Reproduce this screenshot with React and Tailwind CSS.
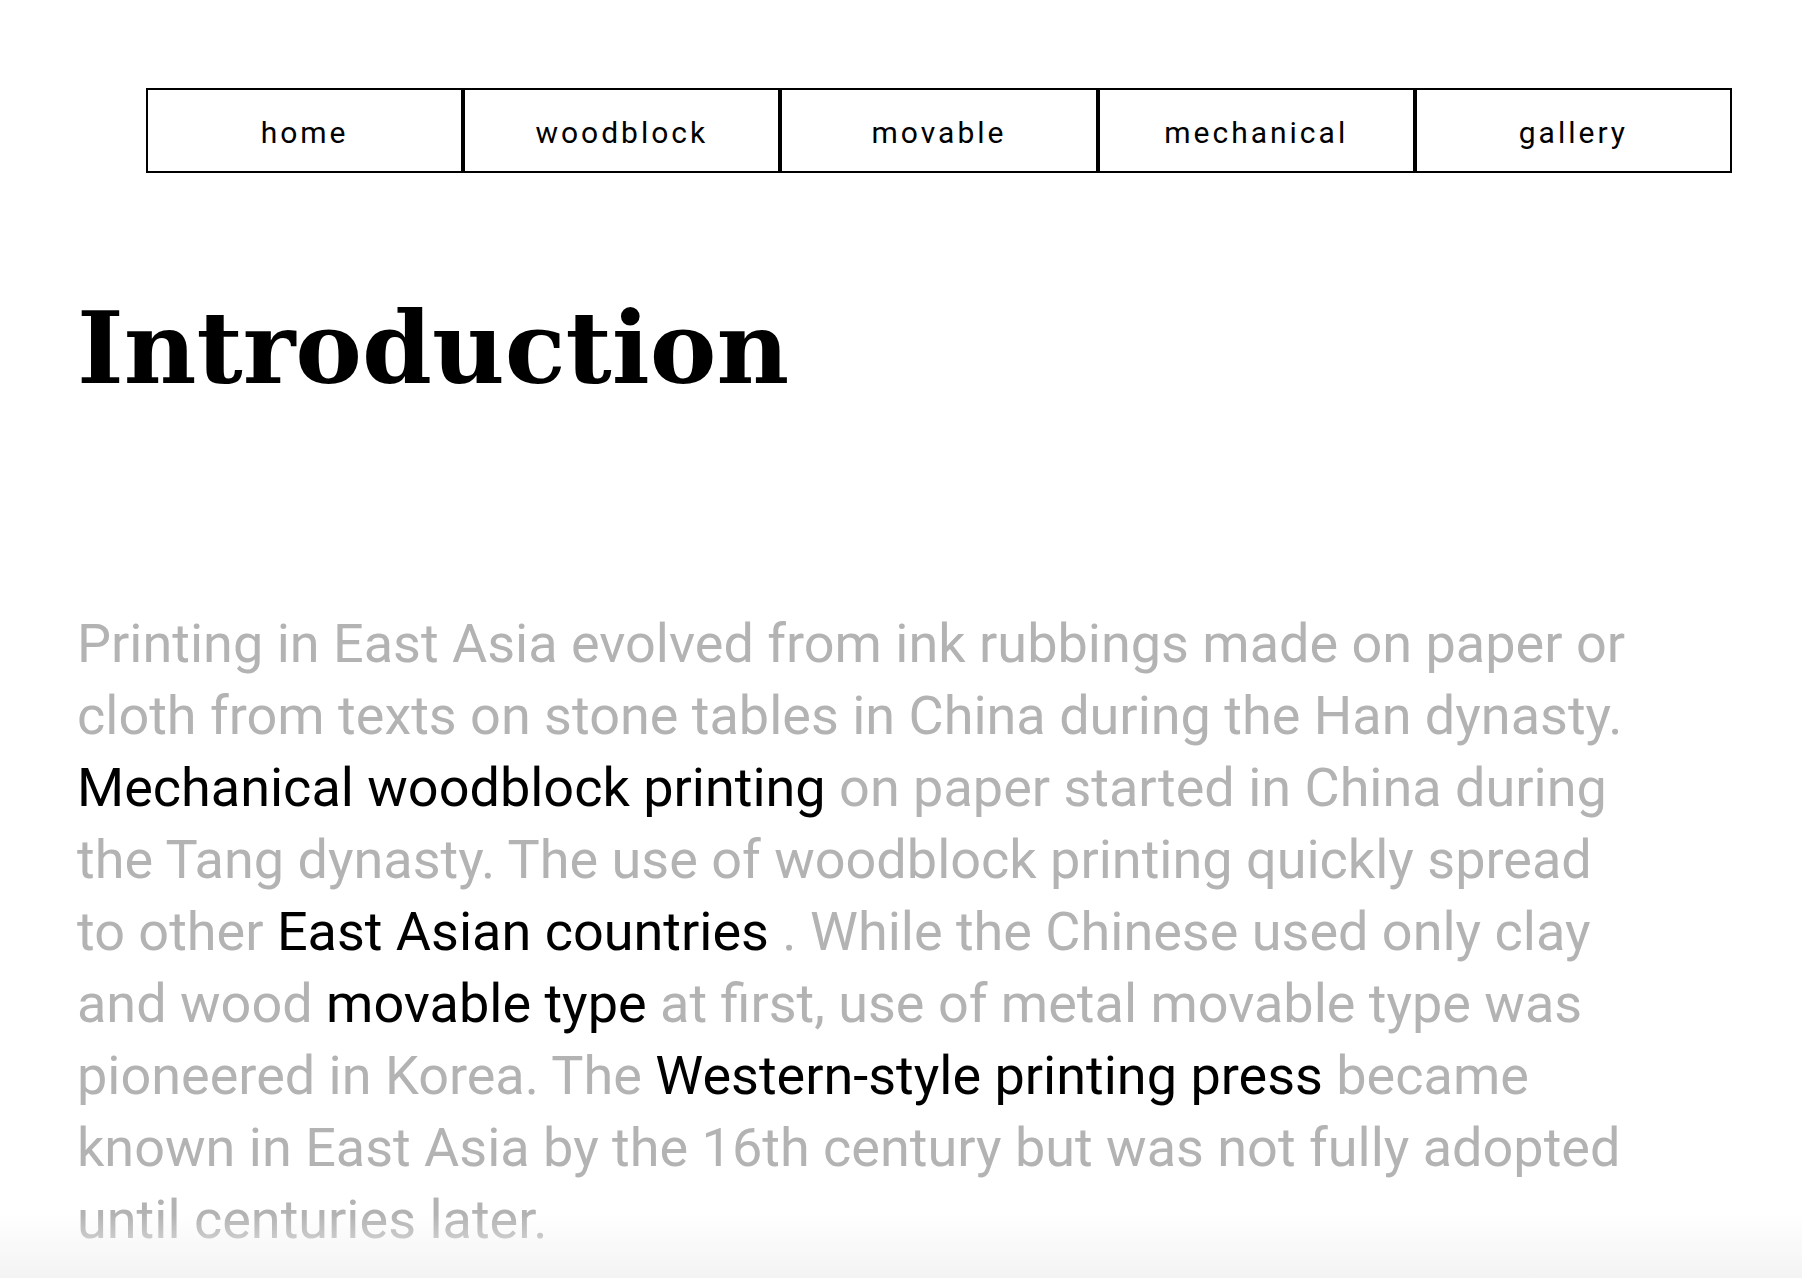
import React from 'react';

const navItems = ['home', 'woodblock', 'movable', 'mechanical', 'gallery'];

const Hi = ({ children }) => <span className="text-black">{children}</span>;

const App = () => {
  return (
    <div className="min-h-screen bg-white relative" style={{ fontFamily: 'Roboto, "Liberation Sans", sans-serif' }}>
      {/* Nav */}
      <nav className="pt-[88px] pl-[146px]">
        <ul className="flex w-[1586px]">
          {navItems.map((item) => (
            <li
              key={item}
              className="flex-1 h-[85px] pt-[3px] border-2 border-black flex items-center justify-center text-[30px] tracking-[3px] text-black"
            >
              {item}
            </li>
          ))}
        </ul>
      </nav>

      {/* Main */}
      <main className="pl-[77px]">
        <h1
          className="mt-[125px] text-[100px] leading-none font-bold tracking-[0px] text-black"
          style={{ fontFamily: '"DejaVu Serif", "Liberation Serif", serif' }}
        >
          Introduction
        </h1>

        <p className="mt-[210px] w-[1565px] text-[54px] leading-[72px] text-[#b3b3b3]">
          Printing in East Asia evolved from ink rubbings made on paper or cloth from texts on stone tables in China
          during the Han dynasty. <Hi>Mechanical woodblock printing</Hi> on paper started in China during the Tang
          dynasty. The use of woodblock printing quickly spread to other <Hi>East Asian countries</Hi> . While the
          Chinese used only clay and wood <Hi>movable type</Hi> at first, use of metal movable type was pioneered in
          Korea. The <Hi>Western-style printing press</Hi> became known in East Asia by the 16th century but was not
          fully adopted until centuries later.
        </p>
      </main>

      {/* bottom fade */}
      <div className="fixed bottom-0 left-0 right-0 h-[64px] bg-gradient-to-b from-white/0 to-[#f3f3f3] pointer-events-none" />
    </div>
  );
};

export default App;
